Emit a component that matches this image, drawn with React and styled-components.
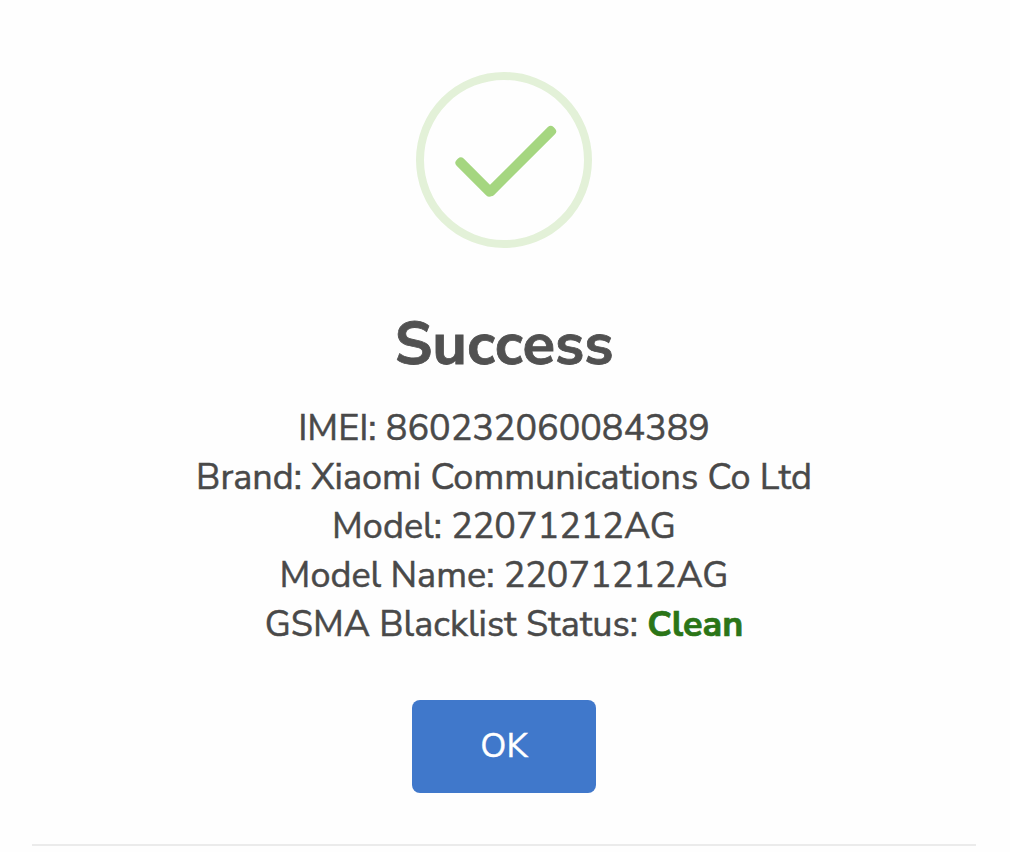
import React from 'react';
import styled, { createGlobalStyle } from 'styled-components';

const GlobalStyle = createGlobalStyle`
  body {
    margin: 0;
    background-color: #fefefe;
    overflow: hidden;
  }
`;
const Popup = styled.div`
  box-sizing: border-box;
  width: 1008px;
  height: 852px;
  padding: 72px 32px 0;
  display: flex;
  flex-direction: column;
  align-items: center;
  font-family: 'Nunito Sans', Nunito, Lato, sans-serif;
`;
const Icon = styled.svg`
  display: block;
  width: 176px;
  height: 176px;
`;
const Title = styled.h2`
  margin: 60px 0 0;
  color: #515151;
  font-size: 60px;
  line-height: 72px;
  font-weight: 700;
  -webkit-text-stroke: 0.8px currentColor;
`;
const Details = styled.div`
  margin-top: 24px;
  color: #494949;
  font-size: 36px;
  line-height: 49px;
  font-weight: 400;
  -webkit-text-stroke: 0.5px currentColor;
`;
const Line = styled.div`
  text-align: center;
  white-space: nowrap;
`;
const Status = styled.strong`
  color: #2b7517;
  font-weight: 700;
  -webkit-text-stroke: 0.7px currentColor;
`;
const Button = styled.button`
  margin-top: 51px;
  width: 184px;
  height: 93px;
  padding: 0 0 1px;
  border: none;
  border-radius: 8px;
  background-color: #4078cb;
  color: white;
  font-family: inherit;
  font-size: 34px;
  -webkit-text-stroke: 0.4px currentColor;
`;
const Footer = styled.div`
  margin-top: 51px;
  width: 944px;
  border-top: 2px solid #ebebeb;
`;

const lines = [
  { label: 'IMEI', value: '860232060084389' },
  { label: 'Brand', value: 'Xiaomi Communications Co Ltd' },
  { label: 'Model', value: '22071212AG' },
  { label: 'Model Name', value: '22071212AG' },
];

function SuccessIcon() {
  return (
    <Icon viewBox="0 0 176 176">
      <circle cx="88" cy="88" r="84" fill="none" stroke="#e3f1d8" strokeWidth="8" />
      <g fill="#a5d680">
        <rect x="34" y="100" width="50" height="10" rx="4" transform="rotate(45 59 105)" />
        <rect x="58" y="84" width="94" height="10" rx="4" transform="rotate(-45 105 89)" />
      </g>
    </Icon>
  );
}

function App() {
  return (
    <>
      <GlobalStyle />
      <Popup>
        <SuccessIcon />
        <Title>Success</Title>
        <Details>
          {lines.map(line => (
            <Line key={line.label}>{line.label}: {line.value}</Line>
          ))}
          <Line>GSMA Blacklist Status: <Status>Clean</Status></Line>
        </Details>
        <Button>OK</Button>
        <Footer />
      </Popup>
    </>
  );
}

export default App;
